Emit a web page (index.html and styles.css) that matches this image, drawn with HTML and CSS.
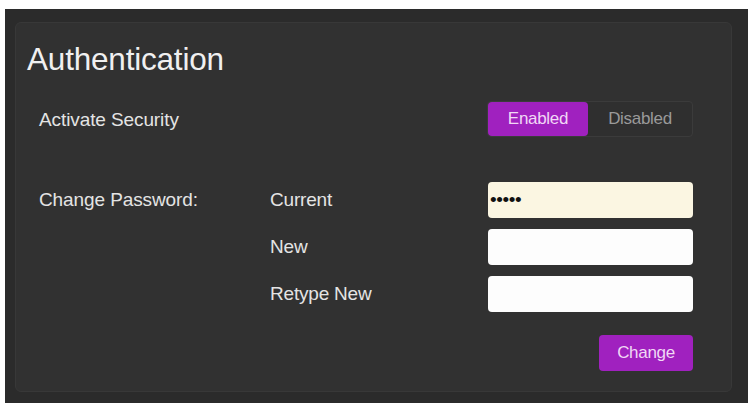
FILE: index.html
```html
<!DOCTYPE html>
<html>
<head>
<meta charset="utf-8">
<link rel="stylesheet" href="styles.css">
</head>
<body>
<div class="frame">
  <div class="panel">
    <h1 class="title">Authentication</h1>
    <div class="row security">
      <div class="label">Activate Security</div>
      <div class="toggle">
        <span class="opt on">Enabled</span>
        <span class="opt off">Disabled</span>
      </div>
    </div>
    <div class="pw">
      <div class="label pwlabel">Change Password:</div>
      <div class="fields">
        <div class="field"><span class="flabel">Current</span><div class="input filled">•••••</div></div>
        <div class="field"><span class="flabel">New</span><div class="input"></div></div>
        <div class="field"><span class="flabel">Retype New</span><div class="input"></div></div>
        <div class="actions"><span class="btn">Change</span></div>
      </div>
    </div>
  </div>
</div>
</body>
</html>
```
FILE: styles.css
```css
html, body { margin: 0; padding: 0; background: #ffffff; }
body {
  width: 751px; height: 406px;
  font-family: "Liberation Sans", Arial, sans-serif;
  color: #e4e4e4;
  padding: 9px 3px 3px 5px;
  box-sizing: border-box;
}
.frame {
  background: #2b2b2b;
  height: 394px;
  padding: 13px 16px 11px 10px;
  box-sizing: border-box;
}
.panel {
  background: #313131;
  border: 1px solid #383838;
  border-radius: 6px;
  height: 100%;
  box-sizing: border-box;
  padding: 0 38px 0 11px;
}
.title {
  margin: 0;
  font-weight: normal;
  font-size: 31.5px;
  line-height: 32px;
  padding-top: 20px;
  color: #f0f0f0;
  letter-spacing: -0.2px;
}
.row { display: flex; align-items: center; justify-content: space-between; }
.security { margin-top: 24px; padding-left: 12px; }
.label { font-size: 19px; letter-spacing: -0.1px; }
.security .label { padding-top: 4px; }
.toggle {
  display: flex;
  border: 1px solid #3b3b3b;
  border-radius: 4px;
  background: #2f2f2f;
  height: 36px;
  box-sizing: border-box;
  margin-top: 2px;
}
.opt {
  display: flex; align-items: center; justify-content: center;
  font-size: 17px; letter-spacing: -0.3px;
}
.opt.on { width: 100px; background: #a021bf; color: #f0d8f5; border-radius: 4px; }
.opt.off { width: 104px; color: #9a9a9a; }
.pw { display: flex; margin-top: 45px; padding-left: 12px; }
.pwlabel { width: 231px; height: 36px; display: flex; align-items: center; }
.fields { flex: 1; display: flex; flex-direction: column; gap: 11px; }
.field { display: flex; align-items: center; justify-content: space-between; height: 36px; }
.flabel { font-size: 19px; letter-spacing: -0.2px; }
.input {
  width: 205px; height: 36px; box-sizing: border-box;
  background: #fdfdfd; border-radius: 4px;
  font-size: 19px; color: #111; padding-left: 2px;
  display: flex; align-items: center; letter-spacing: -0.4px;
}
.input.filled { background: #fbf6e2; }
.actions { display: flex; justify-content: flex-end; margin-top: 12px; }
.btn {
  width: 94px; height: 36px; background: #a021bf; color: #f0d8f5;
  border-radius: 4px; font-size: 17px; letter-spacing: -0.3px;
  display: flex; align-items: center; justify-content: center;
}
```
